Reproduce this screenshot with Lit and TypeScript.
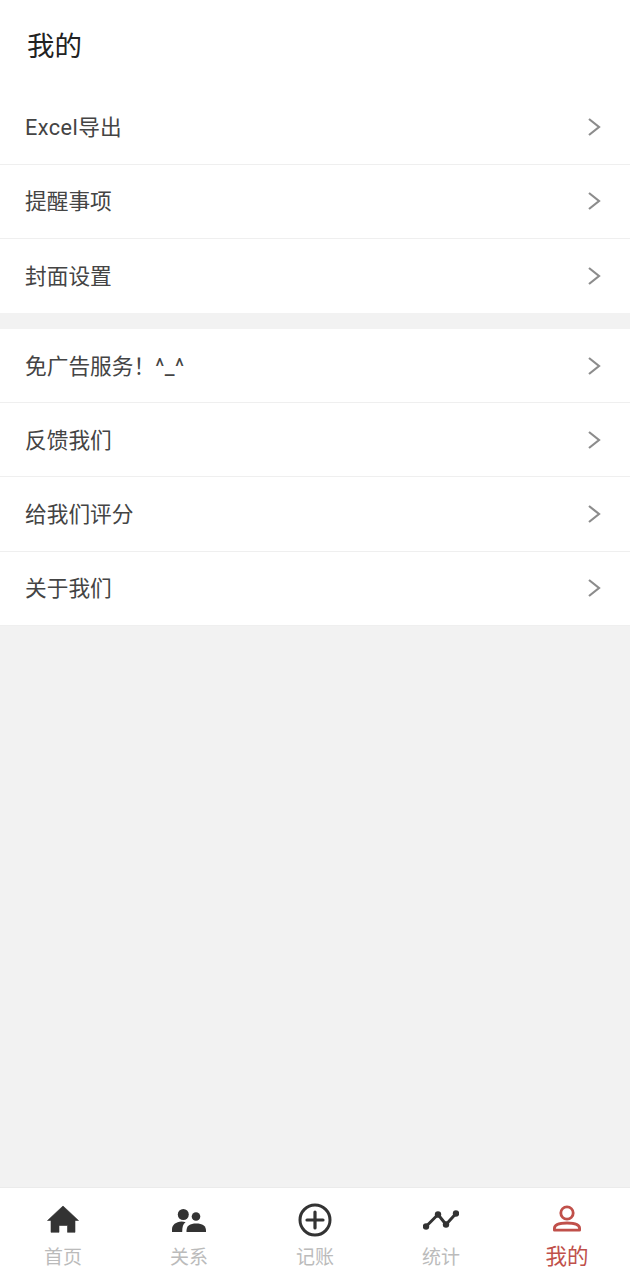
import { LitElement, html, css, svg } from "lit";
import { customElement } from "lit/decorators.js";

const groups = [
  ["Excel导出", "提醒事项", "封面设置"],
  ["免广告服务！^_^", "反馈我们", "给我们评分", "关于我们"],
];

const icons = {
  home: svg`<path fill="#333" stroke="#333" stroke-width="0.6" stroke-linejoin="miter" d="M18 3 L33.5 17.5 H30 V29.3 H22.5 V22.5 H14 V29.3 H6 V17.5 H2.5 Z"/>`,
  people: svg`<circle cx="12.3" cy="11.5" r="5.5" fill="#333"/><circle cx="25" cy="13.5" r="4.3" fill="#333"/>
    <path fill="#333" d="M1 29 V26.5 C1 22 5 18.6 10.5 18.5 C12 18.5 13.5 18.8 14.6 19.3 C12 21 11.3 24 11.2 29 Z"/>
    <path fill="#333" d="M15.5 29 V27.5 C15.5 23 19 20.5 25.2 20.5 C31.5 20.5 35 23 35 27.5 V29 Z"/>`,
  add: svg`<circle cx="18" cy="17" r="15" fill="none" stroke="#333" stroke-width="3"/>
    <path d="M18 9 V25 M10 17 H26" fill="none" stroke="#333" stroke-width="3.2" stroke-linecap="round"/>`,
  chart: svg`<path d="M3 23.5 L15 11.5 L23 21.5 L33 10.5" fill="none" stroke="#333" stroke-width="3" stroke-linejoin="round"/>
    <circle cx="3" cy="23.5" r="3.2" fill="#333"/><circle cx="15" cy="11.5" r="3.2" fill="#333"/><circle cx="23" cy="21.5" r="3.2" fill="#333"/><circle cx="33" cy="10.5" r="3.2" fill="#333"/>`,
  me: svg`<circle cx="18" cy="10" r="6.2" fill="none" stroke="#c0504a" stroke-width="2.8"/>
    <path d="M5.4 27.2 V25.5 C5.4 22 10 20 18 20 C26 20 30.6 22 30.6 25.5 V27.2 Z" fill="none" stroke="#c0504a" stroke-width="2.8" stroke-linejoin="round"/>`,
};

const tabs = [
  { label: "首页", icon: icons.home },
  { label: "关系", icon: icons.people },
  { label: "记账", icon: icons.add },
  { label: "统计", icon: icons.chart },
  { label: "我的", icon: icons.me, active: true },
];

const segments = (t: string) =>
  t.split(/([A-Za-z^_]+)/).filter(Boolean).map((s) =>
    /^[A-Za-z^_]+$/.test(s) ? html`<span class="latin">${s}</span>` : s
  );

@customElement("app-root")
export class AppRoot extends LitElement {
  static styles = css`
    :host {
      display: flex;
      flex-direction: column;
      width: 630px;
      height: 1280px;
      background: #f2f2f2;
      font-family: "Roboto", "Noto Sans CJK SC", sans-serif;
      overflow: hidden;
    }
    .title {
      height: 90.5px;
      box-sizing: border-box;
      background: #fff;
      padding: 28px 0 0 27px;
      font-size: 27.5px;
      line-height: 38px;
      color: #222;
    }
    .group {
      display: flex;
      flex-direction: column;
      background: #fff;
    }
    .group + .group {
      margin-top: 16px;
    }
    .list {
      flex: 0 0 auto;
    }
    .row {
      height: 74.2px;
      box-sizing: border-box;
      display: flex;
      align-items: center;
      justify-content: space-between;
      padding: 0 29px 0 25px;
      border-bottom: 1.5px solid #efefef;
      font-size: 21.7px;
      line-height: 30px;
      color: #444;
    }
    .row-text {
      margin-top: 2px;
    }
    .latin {
      letter-spacing: 0.45px;
    }
    .group:first-child .row:last-child {
      border-bottom: none;
    }
    .chev {
      width: 14px;
      height: 22px;
      display: block;
    }
    .spacer {
      flex: 1;
    }
    .tabbar {
      height: 93px;
      box-sizing: border-box;
      display: grid;
      grid-template-columns: repeat(5, 1fr);
      background: #fff;
      border-top: 1.5px solid #ebebeb;
    }
    .tab {
      display: flex;
      flex-direction: column;
      align-items: center;
      padding-top: 15px;
      font-size: 19px;
      line-height: 26px;
      color: #bbb;
    }
    .tab svg {
      width: 36px;
      height: 36px;
      display: block;
      margin-bottom: 6px;
    }
    .tab.active {
      color: #c0504a;
      font-size: 21.5px;
      line-height: 24px;
    }
  `;

  render() {
    return html`
      <div class="title">我的</div>
      <div class="list">
        ${groups.map(
          (g) => html`<div class="group">
            ${g.map(
              (t) => html`<div class="row">
                <span class="row-text">${segments(t)}</span>
                <svg class="chev" viewBox="0 0 14 22"><path d="M2 3 L12 11 L2 19" fill="none" stroke="#8c8c8c" stroke-width="2.2"/></svg>
              </div>`
            )}
          </div>`
        )}
      </div>
      <div class="spacer"></div>
      <div class="tabbar">
        ${tabs.map(
          (t) => html`<div class="tab ${t.active ? "active" : ""}">
            <svg viewBox="0 0 36 36">${t.icon}</svg>
            <span>${t.label}</span>
          </div>`
        )}
      </div>
    `;
  }
}
